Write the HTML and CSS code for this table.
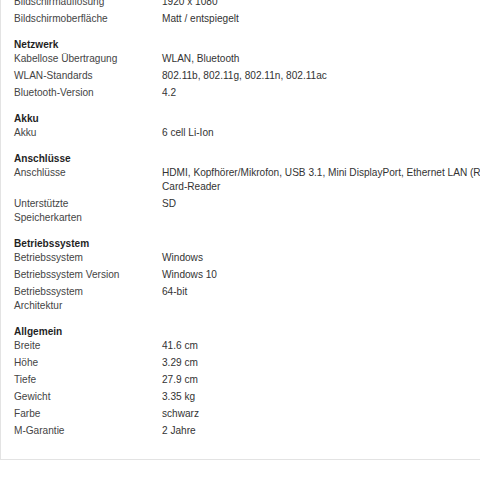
FILE: index.html
```html
<!DOCTYPE html>
<html lang="de">
<head>
<meta charset="utf-8">
<title>Technische Daten</title>
<link rel="stylesheet" href="styles.css">
</head>
<body>
<div class="specs">
  <section class="group">
    <dl class="rows">
      <dt>Bildschirmauflösung</dt><dd>1920 x 1080</dd>
      <dt>Bildschirmoberfläche</dt><dd>Matt / entspiegelt</dd>
    </dl>
  </section>
  <section class="group">
    <h3 class="title">Netzwerk</h3>
    <dl class="rows">
      <dt>Kabellose Übertragung</dt><dd>WLAN, Bluetooth</dd>
      <dt>WLAN-Standards</dt><dd>802.11b, 802.11g, 802.11n, 802.11ac</dd>
      <dt>Bluetooth-Version</dt><dd>4.2</dd>
    </dl>
  </section>
  <section class="group">
    <h3 class="title">Akku</h3>
    <dl class="rows">
      <dt>Akku</dt><dd>6 cell Li-Ion</dd>
    </dl>
  </section>
  <section class="group">
    <h3 class="title">Anschlüsse</h3>
    <dl class="rows">
      <dt>Anschlüsse</dt><dd>HDMI, Kopfhörer/Mikrofon, USB 3.1, Mini DisplayPort, Ethernet LAN (RJ-45), Card-Reader</dd>
      <dt>Unterstützte Speicherkarten</dt><dd>SD</dd>
    </dl>
  </section>
  <section class="group">
    <h3 class="title">Betriebssystem</h3>
    <dl class="rows">
      <dt>Betriebssystem</dt><dd>Windows</dd>
      <dt>Betriebssystem Version</dt><dd>Windows 10</dd>
      <dt>Betriebssystem Architektur</dt><dd>64-bit</dd>
    </dl>
  </section>
  <section class="group">
    <h3 class="title">Allgemein</h3>
    <dl class="rows">
      <dt>Breite</dt><dd>41.6 cm</dd>
      <dt>Höhe</dt><dd>3.29 cm</dd>
      <dt>Tiefe</dt><dd>27.9 cm</dd>
      <dt>Gewicht</dt><dd>3.35 kg</dd>
      <dt>Farbe</dt><dd>schwarz</dd>
      <dt>M-Garantie</dt><dd>2 Jahre</dd>
    </dl>
  </section>
</div>
</body>
</html>
```
FILE: styles.css
```css
html, body {
  margin: 0;
  padding: 0;
  background: #fff;
  overflow: hidden;
}
body {
  font-family: "Liberation Sans", Arial, Helvetica, sans-serif;
  font-size: 10.1px;
  line-height: 14px;
  color: #3a3a3a;
}
.specs {
  width: 620px;
  margin-top: -5px;
  padding: 0 0 21px 13px;
  border-left: 1px solid #e3e3e3;
  border-bottom: 1px solid #e3e3e3;
  display: flex;
  flex-direction: column;
  gap: 12px;
}
.group {
  display: flex;
  flex-direction: column;
  gap: 0;
}
.title {
  margin: 0;
  font-size: 10.1px;
  line-height: 14px;
  font-weight: bold;
  color: #1f1f1f;
}
.rows {
  margin: 0;
  display: grid;
  grid-template-columns: 148px 370px;
  row-gap: 3px;
}
.rows dt, .rows dd {
  margin: 0;
}
.rows dt {
  padding-right: 40px;
  color: #444;
}
.rows dd {
  color: #333;
}
```
